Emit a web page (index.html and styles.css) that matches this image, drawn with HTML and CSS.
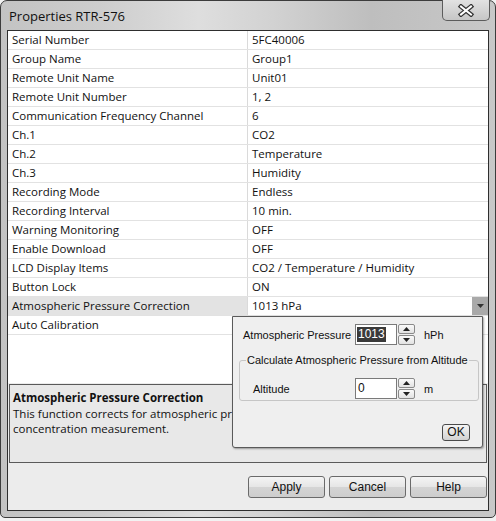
FILE: index.html
```html
<!DOCTYPE html>
<html>
<head>
<meta charset="utf-8">
<link rel="stylesheet" href="styles.css">
</head>
<body>
<div class="window">
  <div class="titlebar">
    <span class="title">Properties RTR-576</span>
    <div class="close">
      <svg width="18" height="13" viewBox="0 0 18 13"><path d="M4 2.5 L14 10.5 M14 2.5 L4 10.5" stroke="#333" stroke-width="4.5" stroke-linecap="square" fill="none"/><path d="M4 2.5 L14 10.5 M14 2.5 L4 10.5" stroke="#fff" stroke-width="2" stroke-linecap="square" fill="none"/></svg>
    </div>
  </div>
  <div class="client">
    <div class="grid">
      <div class="row"><div class="k">Serial Number</div><div class="v">5FC40006</div></div>
      <div class="row"><div class="k">Group Name</div><div class="v">Group1</div></div>
      <div class="row"><div class="k">Remote Unit Name</div><div class="v">Unit01</div></div>
      <div class="row"><div class="k">Remote Unit Number</div><div class="v">1, 2</div></div>
      <div class="row"><div class="k">Communication Frequency Channel</div><div class="v">6</div></div>
      <div class="row"><div class="k">Ch.1</div><div class="v">CO2</div></div>
      <div class="row"><div class="k">Ch.2</div><div class="v">Temperature</div></div>
      <div class="row"><div class="k">Ch.3</div><div class="v">Humidity</div></div>
      <div class="row"><div class="k">Recording Mode</div><div class="v">Endless</div></div>
      <div class="row"><div class="k">Recording Interval</div><div class="v">10 min.</div></div>
      <div class="row"><div class="k">Warning Monitoring</div><div class="v">OFF</div></div>
      <div class="row"><div class="k">Enable Download</div><div class="v">OFF</div></div>
      <div class="row"><div class="k">LCD Display Items</div><div class="v">CO2 / Temperature / Humidity</div></div>
      <div class="row"><div class="k">Button Lock</div><div class="v">ON</div></div>
      <div class="row sel"><div class="k">Atmospheric Pressure Correction</div><div class="v">1013 hPa<span class="drop"><svg width="7" height="4" viewBox="0 0 7 4"><path d="M0 0 H7 L3.5 4 Z" fill="#333"/></svg></span></div></div>
      <div class="row"><div class="k">Auto Calibration</div><div class="v"></div></div>
    </div>
    <div class="desc">
      <div class="desc-title">Atmospheric Pressure Correction</div>
      <div class="desc-text">This function corrects for atmospheric pressure in CO2<br>concentration measurement.</div>
    </div>
    <div class="buttons">
      <div class="btn">Apply</div>
      <div class="btn">Cancel</div>
      <div class="btn">Help</div>
    </div>
  </div>
  <div class="popup">
    <div class="prow prow-top">
      <span class="plabel">Atmospheric Pressure</span>
      <div class="input"><span class="selected">1013</span></div>
      <div class="spin"><div class="sb"><svg width="7" height="4" viewBox="0 0 7 4"><path d="M0 4 H7 L3.5 0 Z" fill="#222"/></svg></div><div class="sb"><svg width="7" height="4" viewBox="0 0 7 4"><path d="M0 0 H7 L3.5 4 Z" fill="#222"/></svg></div></div>
      <span class="unit">hPh</span>
    </div>
    <fieldset class="group">
      <legend>Calculate Atmospheric Pressure from Altitude</legend>
      <div class="prow prow-alt">
        <span class="plabel short">Altitude</span>
        <div class="input white"><span>0</span></div>
        <div class="spin"><div class="sb"><svg width="7" height="4" viewBox="0 0 7 4"><path d="M0 4 H7 L3.5 0 Z" fill="#222"/></svg></div><div class="sb"><svg width="7" height="4" viewBox="0 0 7 4"><path d="M0 0 H7 L3.5 4 Z" fill="#222"/></svg></div></div>
        <span class="unit">m</span>
      </div>
    </fieldset>
    <div class="okrow"><div class="ok">OK</div></div>
  </div>
</div>
</body>
</html>
```

FILE: styles.css
```css
* { box-sizing: border-box; }
html, body { margin: 0; padding: 0; }
body {
  width: 496px;
  height: 521px;
  background: #f2f2f2;
  font-family: "Open Sans", "Noto Sans", sans-serif;
  color: #111;
  overflow: hidden;
}
.window {
  position: relative;
  width: 496px;
  height: 518px;
  border: 1px solid #3c3c3c;
  border-radius: 7px 7px 5px 5px;
  background: linear-gradient(90deg, #c3c3c3 0%, #cdcdcd 20%, #dedede 40%, #d2d2d2 55%, #bebebe 75%, #c8c8c8 100%);
  padding: 29px 6px 6px 6px;
}
.titlebar {
  position: absolute;
  left: 0; top: 0; right: 0;
  height: 29px;
}
.title {
  position: absolute;
  left: 8px;
  top: 6px;
  font-size: 13px;
  color: #111;
}
.close {
  position: absolute;
  right: 5px;
  top: -1px;
  width: 48px;
  height: 21px;
  border: 1px solid #5c5c5c;
  border-top: none;
  border-radius: 0 0 5px 5px;
  background: linear-gradient(#e2e2e2, #c6c6c6);
  display: flex;
  align-items: center;
  justify-content: center;
}
.client {
  height: 481px;
  border: 1px solid #2e2e2e;
  background: #ececec;
  display: flex;
  flex-direction: column;
}
.grid {
  height: 352px;
  flex-shrink: 0;
  background: #fff;
  font-size: 11.5px;
}
.row {
  display: flex;
  height: 19px;
  border-bottom: 1px solid #e2e2e2;
}
.k {
  width: 240px;
  padding-left: 4px;
  line-height: 18px;
  border-right: 1px solid #dadada;
  white-space: nowrap;
}
.v {
  flex: 1;
  padding-left: 4px;
  line-height: 18px;
  position: relative;
  white-space: nowrap;
}
.sel .k { background: #e3e3e3; }
.drop {
  position: absolute;
  right: 0;
  top: 0;
  width: 16px;
  height: 18px;
  background: #a9a9a9;
  display: flex;
  align-items: center;
  justify-content: center;
}
.desc {
  margin: 1px 1px 0 1px;
  height: 79px;
  flex-shrink: 0;
  border: 1px solid #5a5a5a;
  background: #e8e8e8;
  padding: 4px 3px 0 3px;
  font-size: 11.5px;
}
.desc-title {
  font-weight: bold;
  line-height: 17px;
}
.desc-text {
  line-height: 15px;
}
.buttons {
  margin-top: 13px;
  display: flex;
  justify-content: flex-end;
  gap: 4px;
  padding-right: 1px;
}
.btn {
  width: 77px;
  height: 22px;
  border: 1px solid #6a6a6a;
  border-radius: 3px;
  background: linear-gradient(#f4f4f4 0%, #e6e6e6 48%, #d4d4d4 52%, #cdcdcd 100%);
  font-family: "Liberation Sans", sans-serif;
  font-size: 12px;
  text-align: center;
  line-height: 20px;
  color: #111;
}
.popup {
  position: absolute;
  left: 231px;
  top: 315px;
  width: 251px;
  height: 132px;
  border: 1px solid #5a5a5a;
  border-radius: 0 0 3px 3px;
  background: #efefef;
  box-shadow: 1px 1px 2px rgba(0,0,0,0.35);
  padding: 7px 4px 0 5px;
  font-family: "Liberation Sans", sans-serif;
  font-size: 11px;
  color: #111;
  white-space: nowrap;
}
.prow {
  display: flex;
  align-items: center;
  height: 21px;
}
.prow-top { padding-left: 5px; }
.prow-alt { padding-left: 13px; }
.plabel { width: 112px; flex-shrink: 0; }
.plabel.short { width: 102px; }
.input {
  width: 42px;
  height: 21px;
  flex-shrink: 0;
  border: 1px solid #7a7a7a;
  background: #fff;
  padding: 2px 0 0 1px;
  font-size: 12px;
}
.input span { display: inline-block; line-height: 15px; padding: 0 1px; }
.input .selected { background: #3a3a3a; color: #fff; }
.spin {
  width: 17px;
  height: 21px;
  flex-shrink: 0;
  margin-left: 1px;
  display: flex;
  flex-direction: column;
  gap: 1px;
}
.sb {
  flex: 1;
  border: 1px solid #8a8a8a;
  border-radius: 2px;
  background: linear-gradient(#fafafa, #e2e2e2);
  display: flex;
  align-items: center;
  justify-content: center;
}
.unit { margin-left: 9px; }
.group {
  margin: 8px 0 0 1px;
  width: 240px;
  height: 48px;
  border: 1px solid #c6c6c6;
  border-radius: 3px;
  padding: 11px 0 0 0;
}
.group legend {
  padding: 0 1px;
  margin-left: 6px;
  line-height: 14px;
}
.okrow {
  display: flex;
  justify-content: flex-end;
  padding-right: 8px;
  margin-top: 23px;
}
.ok {
  width: 28px;
  height: 17px;
  border: 1px solid #4a4a4a;
  border-radius: 3px;
  background: linear-gradient(#f4f4f4, #d2d2d2);
  text-align: center;
  line-height: 15px;
  font-size: 12px;
}
```
